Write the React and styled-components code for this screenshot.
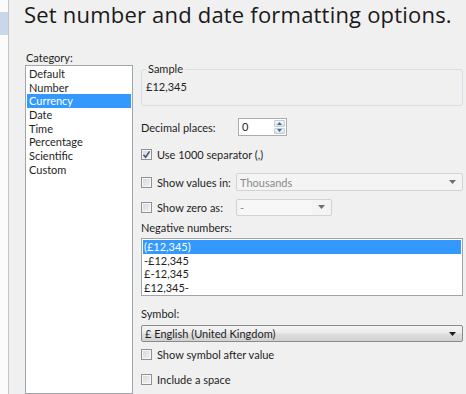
import React from 'react';
import styled, { createGlobalStyle } from 'styled-components';

const GlobalStyle = createGlobalStyle`
  html, body {
    margin: 0;
    padding: 0;
    height: 100%;
    overflow: hidden;
    background: #f0f0f0;
  }
  #root {
    height: 100%;
  }
`;

const Shell = styled.div`
  display: flex;
  height: 394px;
  width: 466px;
  overflow: hidden;
  font-family: Lato, "Open Sans", sans-serif;
  font-size: 11px;
  color: #1e1e1e;
`;

const SideStrip = styled.div`
  width: 8px;
  flex: none;
  background: #fbfbfb;
  border-right: 1px solid #c4c4c8;
  padding-top: 12px;
  box-sizing: content-box;
`;

const SideTab = styled.div`
  height: 23px;
  background: #c9d8e8;
`;

const Main = styled.div`
  flex: 1;
  display: flex;
  flex-direction: column;
  padding: 0 0 0 15px;
  min-width: 0;
`;

const Title = styled.h1`
  margin: 0;
  font-family: "Open Sans", sans-serif;
  font-weight: 400;
  font-size: 22px;
  line-height: 29px;
  letter-spacing: 0.2px;
  color: #1a1a1a;
  white-space: nowrap;
`;

const Body = styled.div`
  display: flex;
  gap: 8px;
  margin-top: 22px;
  flex: 1;
  min-height: 0;
`;

const CategoryColumn = styled.div`
  display: flex;
  flex-direction: column;
  width: 108px;
  margin-left: 1px;
`;

const Label = styled.div`
  height: 14px;
  line-height: 14px;
  white-space: nowrap;
  margin-top: ${p => p.$mt || 0}px;
  padding-left: ${p => p.$pl || 0}px;
`;

const ListBox = styled.div`
  background: #fff;
  border: 1px solid #a0a4ab;
  padding: 1px;
  box-sizing: border-box;
  height: ${p => (p.$h ? `${p.$h}px` : 'auto')};
  flex: ${p => (p.$h ? 'none' : 1)};
  margin-top: ${p => p.$mt || 0}px;
  overflow: hidden;
`;

const ListItem = styled.div`
  height: 13.7px;
  line-height: 13.7px;
  padding-left: ${p => p.$pl}px;
  white-space: nowrap;
  background: ${p => (p.$selected ? '#3399ff' : 'transparent')};
  color: ${p => (p.$selected ? '#fff' : '#1e1e1e')};
`;

const Options = styled.div`
  display: flex;
  flex-direction: column;
  width: 322px;
  margin-top: 11px;
`;

const Group = styled.fieldset`
  margin: 0;
  padding: 4px 4px 11px 4px;
  border: 1px solid #d5dfe5;
  border-radius: 3px;
  min-width: 0;
`;

const Legend = styled.legend`
  padding: 0 2px;
  height: 14px;
  line-height: 14px;
`;

const SampleValue = styled.div`
  height: 14px;
  line-height: 14px;
`;

const Row = styled.div`
  display: flex;
  align-items: center;
  height: ${p => p.$h}px;
  margin-top: ${p => p.$mt}px;
  white-space: nowrap;
`;

const FieldLabel = styled.span`
  width: ${p => p.$w}px;
  flex: none;
`;

const SpinBox = styled.div`
  display: flex;
  width: 49px;
  height: 18px;
  box-sizing: border-box;
  border: 1px solid #abadb3;
  background: #fff;
  padding: 1px;
`;

const SpinValue = styled.span`
  flex: 1;
  padding-left: 2px;
  line-height: 14px;
`;

const SpinButtons = styled.div`
  display: flex;
  flex-direction: column;
  width: 11px;
  gap: 1px;
`;

const SpinButton = styled.div`
  flex: 1;
  display: flex;
  align-items: center;
  justify-content: center;
  background: linear-gradient(#f2f5f9, #d9e2ec);
  border: 1px solid #c5ced8;
  border-radius: 1px;
`;

const CheckRow = styled.label`
  display: flex;
  align-items: center;
  gap: 5px;
  height: 14px;
  margin-top: ${p => p.$mt}px;
  white-space: nowrap;
`;

const Box = styled.span`
  width: 11px;
  height: 11px;
  box-sizing: border-box;
  border: 1px solid #8f9194;
  background: linear-gradient(135deg, #d4d6d9, #f4f4f5);
  box-shadow: inset 0 0 0 1px #f7f7f7;
  display: flex;
  align-items: center;
  justify-content: center;
  flex: none;
`;

const Combo = styled.div`
  display: flex;
  align-items: center;
  box-sizing: border-box;
  width: ${p => (p.$w ? `${p.$w}px` : '100%')};
  height: ${p => p.$h}px;
  padding-left: 3px;
  padding-right: 6px;
  border: 1px solid ${p => (p.$disabled ? '#d3d3d3' : '#8a8a8a')};
  border-radius: 2px;
  background: ${p =>
    p.$disabled
      ? '#f4f4f4'
      : 'linear-gradient(#f4f4f4 0%, #ebebeb 45%, #dddddd 55%, #d2d2d2 100%)'};
  color: ${p => (p.$disabled ? '#8a8a8a' : '#1e1e1e')};
`;

const ComboText = styled.span`
  flex: 1;
  align-self: stretch;
  display: flex;
  align-items: center;
  background: ${p => (p.$field ? '#f7f7f7' : 'transparent')};
  margin-right: ${p => (p.$field ? 6 : 0)}px;
`;

const Arrow = ({ color = '#1e1e1e' }) => (
  <svg width="7" height="4" viewBox="0 0 7 4">
    <polygon points="0,0 7,0 3.5,4" fill={color} />
  </svg>
);

const SpinArrow = ({ up }) => (
  <svg width="5" height="3" viewBox="0 0 5 3">
    <polygon points={up ? '0,3 5,3 2.5,0' : '0,0 5,0 2.5,3'} fill="#4a6a8c" />
  </svg>
);

const Tick = () => (
  <svg width="9" height="9" viewBox="0 0 9 9">
    <path d="M1.5 4.8 L3.6 7.2 L7.6 1.4" fill="none" stroke="#3b4f7a" strokeWidth="1.5" />
  </svg>
);

const Check = ({ checked, children, mt }) => (
  <CheckRow $mt={mt}>
    <Box>{checked && <Tick />}</Box>
    <span>{children}</span>
  </CheckRow>
);

const categories = ['Default', 'Number', 'Currency', 'Date', 'Time', 'Percentage', 'Scientific', 'Custom'];
const negatives = ['(£12,345)', '-£12,345', '£-12,345', '£12,345-'];

export default function App() {
  return (
    <>
      <GlobalStyle />
      <Shell>
        <SideStrip>
          <SideTab />
        </SideStrip>
        <Main>
          <Title>Set number and date formatting options.</Title>
          <Body>
            <CategoryColumn>
              <Label $pl={1}>Category:</Label>
              <ListBox>
                {categories.map(c => (
                  <ListItem key={c} $pl={2} $selected={c === 'Currency'}>
                    {c}
                  </ListItem>
                ))}
              </ListBox>
            </CategoryColumn>
            <Options>
              <Group>
                <Legend>Sample</Legend>
                <SampleValue>£12,345</SampleValue>
              </Group>

              <Row $h={18} $mt={12}>
                <FieldLabel $w={97}>Decimal places:</FieldLabel>
                <SpinBox>
                  <SpinValue>0</SpinValue>
                  <SpinButtons>
                    <SpinButton><SpinArrow up /></SpinButton>
                    <SpinButton><SpinArrow /></SpinButton>
                  </SpinButtons>
                </SpinBox>
              </Row>

              <Check checked mt={11}>Use 1000 separator (,)</Check>

              <Row $h={18} $mt={12}>
                <CheckRow as="span" $mt={0}>
                  <Box />
                  <FieldLabel $w={79}>Show values in:</FieldLabel>
                </CheckRow>
                <Combo $disabled $h={18} $w={227}>
                  <ComboText>Thousands</ComboText>
                  <Arrow color="#6f6f6f" />
                </Combo>
              </Row>

              <Row $h={18} $mt={7}>
                <CheckRow as="span" $mt={0}>
                  <Box />
                  <FieldLabel $w={79}>Show zero as:</FieldLabel>
                </CheckRow>
                <Combo $disabled $h={17} $w={96}>
                  <ComboText $field>-</ComboText>
                  <Arrow color="#6f6f6f" />
                </Combo>
              </Row>

              <Label $mt={5}>Negative numbers:</Label>
              <ListBox $h={58} $mt={3}>
                {negatives.map((n, i) => (
                  <ListItem key={n} $pl={1} $selected={i === 0}>
                    {n}
                  </ListItem>
                ))}
              </ListBox>

              <Label $mt={11}>Symbol:</Label>
              <Row $h={17} $mt={4}>
                <Combo $h={17}>
                  <ComboText>£ English (United Kingdom)</ComboText>
                  <Arrow />
                </Combo>
              </Row>

              <Check mt={5}>Show symbol after value</Check>
              <Check mt={11}>Include a space</Check>
            </Options>
          </Body>
        </Main>
      </Shell>
    </>
  );
}
